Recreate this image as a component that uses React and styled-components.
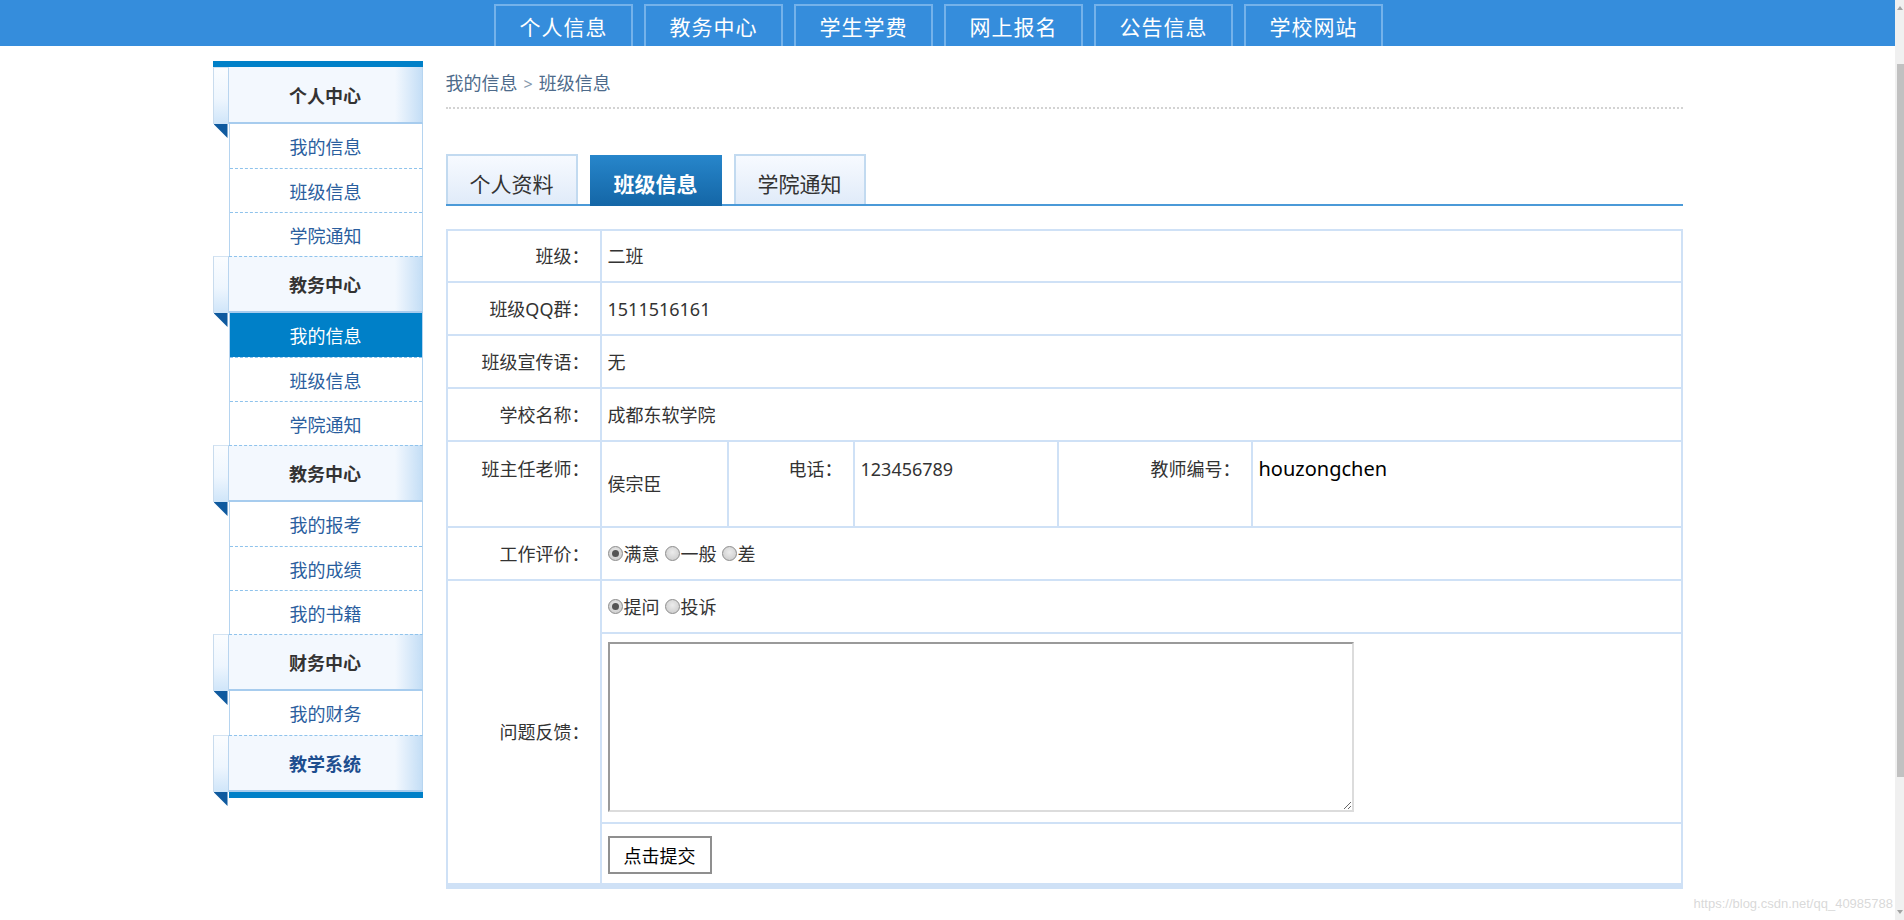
import React from 'react';
import styled, { createGlobalStyle } from 'styled-components';

const GlobalStyle = createGlobalStyle`
  html, body { margin: 0; padding: 0; height: 100%; overflow: hidden; background: #fff; }
  body { font-family: "Noto Sans", "Noto Sans CJK SC", sans-serif; color: #333; }
  *, *::before, *::after { box-sizing: border-box; }
`;

const Shell = styled.div`
  display: flex;
  height: 100vh;
`;

const Page = styled.div`
  flex: 1;
  min-width: 0;
  position: relative;
`;

const TopBar = styled.header`
  height: 46px;
  background: #358ddc;
`;

const TopNav = styled.nav`
  width: 1470px;
  height: 100%;
  margin: 0 auto;
  padding: 4px 0 0 281px;
  display: flex;
  gap: 11px;
`;

const NavItem = styled.a`
  width: 139px;
  height: 42px;
  border: 2px solid #74b2ea;
  border-bottom: none;
  color: #fff;
  font-size: 21px;
  letter-spacing: 1px;
  display: flex;
  align-items: center;
  justify-content: center;
  padding-left: 1px;
  text-decoration: none;
`;

const Container = styled.div`
  width: 1470px;
  margin: 15px auto 0;
  display: flex;
  gap: 23px;
  align-items: flex-start;
`;

/* ---------- Sidebar ---------- */
const Sidebar = styled.aside`
  width: 210px;
  flex: none;
`;

const TopStrip = styled.div`
  height: 6px;
  background: #0080c8;
`;

const HeadRow = styled.div`
  display: flex;
  height: 57px;
`;

const HeadTab = styled.div`
  width: 16px;
  flex: none;
  background: linear-gradient(to bottom, #fbfdff 0%, #eef6fe 55%, #cfe5f9 100%);
  border-left: 1px solid #c9dcee;
  border-right: 1px solid #b9d5ef;
  border-top: 1px solid #d3e3f2;
`;

const HeadBody = styled.div`
  flex: 1;
  display: flex;
  align-items: center;
  justify-content: center;
  font-size: 18px;
  font-weight: bold;
  color: ${(p) => (p.$blue ? '#1d4e8f' : '#333')};
  background: linear-gradient(to right, #f3f8fe 0%, #f3f8fe 86%, #c4def6 100%);
  border-right: 1px solid #b7d5f0;
  border-bottom: 2px solid #a7ccee;
  border-top: ${(p) => (p.$dashed ? '1px dashed #8fc3ec' : 'none')};
`;

const BodyRow = styled.div`
  display: flex;
`;

const Gutter = styled.div`
  width: 16px;
  flex: none;
  padding-left: 1px;
`;

const Fold = styled.div`
  width: 14px;
  height: 14px;
  background: #0f5a9f;
  clip-path: polygon(0 0, 100% 0, 100% 100%);
`;

const ItemList = styled.ul`
  flex: 1;
  margin: 0;
  padding: 0;
  list-style: none;
  border-left: 1px solid #b5d4f0;
  border-right: 1px solid #b5d4f0;
`;

const Item = styled.li`
  height: 44px;
  display: flex;
  align-items: center;
  justify-content: center;
  font-size: 18px;
  color: ${(p) => (p.$active ? '#fff' : '#2a5e9e')};
  background: ${(p) => (p.$active ? '#0080c8' : 'transparent')};
  border-top: ${(p) => (p.$first ? 'none' : '1px dashed #8fc3ec')};
`;

const BottomStrip = styled.div`
  flex: 1;
  height: 6px;
  background: #0080c8;
`;

/* ---------- Main ---------- */
const Main = styled.main`
  width: 1237px;
  flex: none;
`;

const Crumb = styled.div`
  padding: 9px 0 10px;
  font-size: 18px;
  line-height: 26px;
  color: #4e6b8b;
  border-bottom: 2px dotted #d3d3d3;
`;

const CrumbSep = styled.span`
  color: #8799ad;
  font-size: 16px;
  margin: 0 6px;
`;

const TabBar = styled.div`
  margin-top: 45px;
  height: 52px;
  display: flex;
  align-items: flex-end;
  gap: 12px;
  border-bottom: 2px solid #4b9ad8;
`;

const Tab = styled.div`
  width: 132px;
  height: ${(p) => (p.$active ? '51px' : '50px')};
  margin-bottom: ${(p) => (p.$active ? '-2px' : '0')};
  display: flex;
  align-items: center;
  justify-content: center;
  font-size: 21px;
  padding-top: ${(p) => (p.$active ? '5px' : '6px')};
  color: ${(p) => (p.$active ? '#fff' : '#333')};
  font-weight: ${(p) => (p.$active ? 'bold' : 'normal')};
  background: ${(p) =>
    p.$active
      ? 'linear-gradient(to bottom, #2786cb, #1466a6)'
      : 'linear-gradient(to bottom, #f7faff, #e0ebf9)'};
  border: ${(p) => (p.$active ? 'none' : '2px solid #c2daf0')};
  border-bottom: none;
`;

const Grid = styled.div`
  margin-top: 23px;
  display: grid;
  grid-template-columns: 154px 127px 126px 204px 194px 430px;
  grid-template-rows: 52px 53px 53px 53px 86px 53px 53px 190px 61px;
  border-top: 2px solid #cfe1f6;
  border-left: 2px solid #cfe1f6;
  border-bottom: 4px solid #cfe1f6;
`;

const Cell = styled.div`
  border-right: 2px solid #cfe1f6;
  border-bottom: 2px solid #cfe1f6;
  display: flex;
  align-items: ${(p) => (p.$top ? 'flex-start' : 'center')};
  padding-top: ${(p) => (p.$top ? '15px' : '0')};
  line-height: 24px;
  grid-column: span ${(p) => p.$span || 1};
  grid-row: span ${(p) => p.$rows || 1};
`;

const Label = styled(Cell)`
  justify-content: flex-end;
  padding-right: 10px;
  font-size: 18px;
  color: #333;
`;

const Value = styled(Cell)`
  padding-left: 6px;
  font-size: ${(p) => (p.$big ? '20px' : '18px')};
  color: ${(p) => (p.$big ? '#000' : '#333')};
`;

const Options = styled.div`
  display: flex;
  align-items: center;
`;

const Option = styled.label`
  display: flex;
  align-items: center;
  margin-right: 5px;
  font-size: 18px;
  color: #333;
`;

const RadioDot = styled.span`
  width: 15px;
  height: 15px;
  border-radius: 50%;
  border: 1px solid #8c8c8c;
  background: radial-gradient(circle at 50% 40%, #ececec 0%, #d2d2d2 70%, #c4c4c4 100%);
  display: flex;
  align-items: center;
  justify-content: center;
  margin-right: 1px;
  &::after {
    content: '';
    width: 7px;
    height: 7px;
    border-radius: 50%;
    background: ${(p) => (p.$checked ? '#555' : 'transparent')};
  }
`;

const TextArea = styled.textarea`
  width: 746px;
  height: 170px;
  border: 2px solid;
  border-color: #9a9a9a #dcdcdc #dcdcdc #9a9a9a;
  background: #fff;
  outline: none;
  margin: 0;
  margin-top: -2px;
  font-family: inherit;
`;

const SubmitButton = styled.button`
  width: 104px;
  height: 38px;
  padding: 0;
  margin-top: 2px;
  border: 2px solid #8f8f8f;
  background: #fff;
  color: #000;
  font-family: inherit;
  font-size: 18px;
`;

const Watermark = styled.div`
  position: absolute;
  right: 2px;
  bottom: 9px;
  font-family: "Liberation Sans", Arial, sans-serif;
  font-size: 13px;
  color: rgba(200, 200, 200, 0.7);
`;

/* ---------- Scrollbar ---------- */
const ScrollTrack = styled.div`
  width: 9px;
  flex: none;
  background: #f0f0f0;
  display: flex;
  flex-direction: column;
  align-items: flex-end;
  padding: 6px 0 6px;
`;

const Arrow = styled.div`
  width: 0;
  height: 0;
  margin-right: 1px;
  border-left: 3px solid transparent;
  border-right: 3px solid transparent;
  ${(p) =>
    p.$down
      ? 'border-top: 4px solid #a3a3a3;'
      : 'border-bottom: 4px solid #a3a3a3;'}
`;

const Thumb = styled.div`
  width: 7px;
  height: 713px;
  margin-top: 54px;
  background: #c1c1c1;
`;

const Spacer = styled.div`
  flex: 1;
`;

const sections = [
  { title: '个人中心', items: ['我的信息', '班级信息', '学院通知'] },
  { title: '教务中心', items: ['我的信息', '班级信息', '学院通知'], active: 0 },
  { title: '教务中心', items: ['我的报考', '我的成绩', '我的书籍'] },
  { title: '财务中心', items: ['我的财务'] },
  { title: '教学系统', items: [], blue: true },
];

const navs = ['个人信息', '教务中心', '学生学费', '网上报名', '公告信息', '学校网站'];

function Radio({ checked, children }) {
  return (
    <Option>
      <RadioDot $checked={checked} />
      {children}
    </Option>
  );
}

export default function App() {
  return (
    <>
      <GlobalStyle />
      <Shell>
        <Page>
          <TopBar>
            <TopNav>
              {navs.map((n) => (
                <NavItem key={n}>{n}</NavItem>
              ))}
            </TopNav>
          </TopBar>

          <Container>
            <Sidebar>
              <TopStrip />
              {sections.map((s, i) => (
                <section key={i}>
                  <HeadRow>
                    <HeadTab />
                    <HeadBody $dashed={i > 0} $blue={s.blue}>
                      {s.title}
                    </HeadBody>
                  </HeadRow>
                  <BodyRow>
                    <Gutter>
                      <Fold />
                    </Gutter>
                    {s.items.length > 0 ? (
                      <ItemList>
                        {s.items.map((it, j) => (
                          <Item key={j} $first={j === 0} $active={s.active === j}>
                            {it}
                          </Item>
                        ))}
                      </ItemList>
                    ) : (
                      <BottomStrip />
                    )}
                  </BodyRow>
                </section>
              ))}
            </Sidebar>

            <Main>
              <Crumb>
                我的信息<CrumbSep>&gt;</CrumbSep>班级信息
              </Crumb>

              <TabBar>
                <Tab>个人资料</Tab>
                <Tab $active>班级信息</Tab>
                <Tab>学院通知</Tab>
              </TabBar>

              <Grid>
                <Label>班级：</Label>
                <Value $span={5}>二班</Value>

                <Label>班级QQ群：</Label>
                <Value $span={5}>1511516161</Value>

                <Label>班级宣传语：</Label>
                <Value $span={5}>无</Value>

                <Label>学校名称：</Label>
                <Value $span={5}>成都东软学院</Value>

                <Label $top>班主任老师：</Label>
                <Value>侯宗臣</Value>
                <Label $top>电话：</Label>
                <Value $top>123456789</Value>
                <Label $top>教师编号：</Label>
                <Value $top $big>houzongchen</Value>

                <Label>工作评价：</Label>
                <Value $span={5}>
                  <Options>
                    <Radio checked>满意</Radio>
                    <Radio>一般</Radio>
                    <Radio>差</Radio>
                  </Options>
                </Value>

                <Label $rows={3}>问题反馈：</Label>
                <Value $span={5}>
                  <Options>
                    <Radio checked>提问</Radio>
                    <Radio>投诉</Radio>
                  </Options>
                </Value>
                <Value $span={5}>
                  <TextArea />
                </Value>
                <Value $span={5}>
                  <SubmitButton>点击提交</SubmitButton>
                </Value>
              </Grid>
            </Main>
          </Container>

          <Watermark>https://blog.csdn.net/qq_40985788</Watermark>
        </Page>

        <ScrollTrack>
          <Arrow />
          <Thumb />
          <Spacer />
          <Arrow $down />
        </ScrollTrack>
      </Shell>
    </>
  );
}
